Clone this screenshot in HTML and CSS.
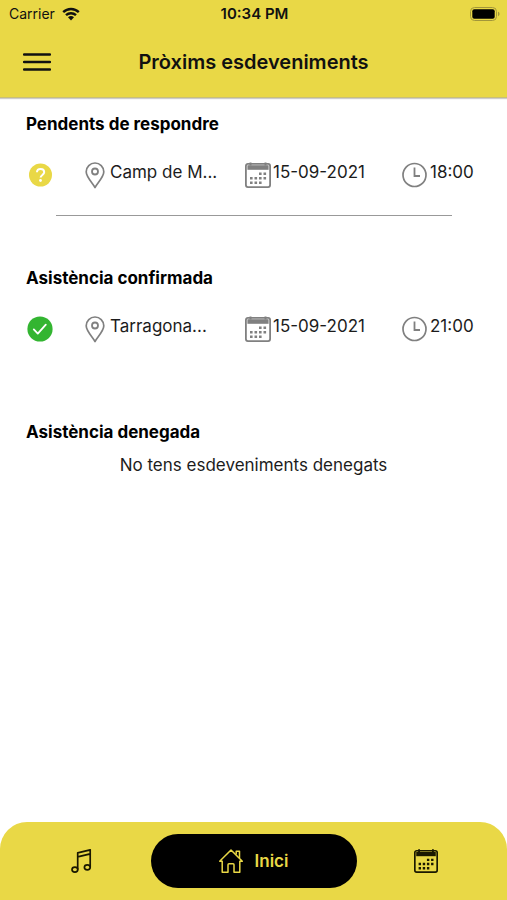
FILE: index.html
```
<!DOCTYPE html>
<html lang="ca">
<head>
    <meta charset="UTF-8">
    <meta name="viewport" content="width=device-width, initial-scale=1.0">
    <title>Pròxims esdeveniments</title>
    <link rel="stylesheet" href="styles.css">
</head>
<body>

    <!-- Shared icons -->
    <svg class="sprite" aria-hidden="true">
        <symbol id="icon-pin" viewBox="0 0 20 27">
            <path d="M10 25.5C7.5 21 1.2 15 1.2 9.8a8.8 8.8 0 0 1 17.6 0C18.8 15 12.5 21 10 25.5z" fill="none" stroke="currentColor" stroke-width="1.7" stroke-linejoin="round"/>
            <circle cx="10" cy="9.5" r="3" fill="none" stroke="currentColor" stroke-width="1.8"/>
        </symbol>
        <symbol id="icon-calendar" viewBox="0 0 26 26">
            <rect x="0.9" y="1.9" width="24.2" height="23.2" rx="2" fill="none" stroke="currentColor" stroke-width="1.8"/>
            <path d="M2.4 3.2h21.2v4.6H2.4z" fill="currentColor"/>
            <path d="M5.5 .4v3M20.5 .4v3" stroke="currentColor" stroke-width="2"/>
            <path d="M14 10.5h2.6v2.6H14zM18.5 10.5h2.6v2.6h-2.6zM5 15h2.6v2.6H5zM9.5 15h2.6v2.6H9.5zM14 15h2.6v2.6H14zM18.5 15h2.6v2.6h-2.6zM5 19.5h2.6v2.6H5zM9.5 19.5h2.6v2.6H9.5zM14 19.5h2.6v2.6H14z" fill="currentColor"/>
        </symbol>
        <symbol id="icon-clock" viewBox="0 0 26 26">
            <circle cx="12.5" cy="13" r="11.5" fill="none" stroke="currentColor" stroke-width="1.7"/>
            <path d="M12.5 5.5v8.5h5.5" fill="none" stroke="currentColor" stroke-width="1.8"/>
        </symbol>
    </svg>

    <header class="header">
        <div class="status-bar">
            <div class="carrier">
                <span>Carrier</span>
                <svg class="wifi" viewBox="0 0 18 14" aria-hidden="true">
                    <path d="M1.2 5.2a11.2 11.2 0 0 1 15.6 0M4 8.2a7.2 7.2 0 0 1 10 0" fill="none" stroke="currentColor" stroke-width="2.4"/>
                    <path d="M6 10.3a4.4 4.4 0 0 1 6 0L9 13.5z" fill="currentColor"/>
                </svg>
            </div>
            <span class="clock">10:34 PM</span>
            <svg class="battery" viewBox="0 0 30 14" aria-hidden="true">
                <rect x="0.5" y="0.5" width="26" height="13" rx="4" fill="none" stroke="#a2963a"/>
                <rect x="2.3" y="2.3" width="22.4" height="9.4" rx="2" fill="#000"/>
                <path d="M28 4.8c2 .6 2 3.8 0 4.4z" fill="#a2963a"/>
            </svg>
        </div>
        <div class="title-bar">
            <button class="menu-btn" type="button" aria-label="Menú">
                <svg viewBox="0 0 28 18" aria-hidden="true">
                    <path d="M1 1.5h26M1 9h26M1 16.5h26" stroke="currentColor" stroke-width="2.4" stroke-linecap="round"/>
                </svg>
            </button>
            <h1>Pròxims esdeveniments</h1>
        </div>
    </header>

    <main>
        <section>
            <h2>Pendents de respondre</h2>
            <div class="event pending">
                <svg class="status" viewBox="0 0 26 26" role="img" aria-label="Pendent">
                    <circle cx="13.5" cy="13" r="11.5" fill="#e9d846"/>
                    <path d="M10 10.3c0-4.4 7.2-4.4 7.2 0 0 2.6-3.6 2.7-3.6 5.2" fill="none" stroke="#fff" stroke-width="2"/>
                    <circle cx="13.5" cy="18.5" r="1.4" fill="#fff"/>
                </svg>
                <span class="place"><svg class="pin" aria-hidden="true"><use href="#icon-pin"/></svg>Camp de M...</span>
                <span class="date"><svg class="icon" aria-hidden="true"><use href="#icon-calendar"/></svg>15-09-2021</span>
                <span class="time"><svg class="icon" aria-hidden="true"><use href="#icon-clock"/></svg>18:00</span>
            </div>
        </section>

        <section>
            <h2>Asistència confirmada</h2>
            <div class="event">
                <svg class="status" viewBox="0 0 26 26" role="img" aria-label="Confirmada">
                    <circle cx="13" cy="13" r="12.6" fill="#33b531"/>
                    <path d="M6.8 13.4l4 4.2 8-9" fill="none" stroke="#fff" stroke-width="1.8" stroke-linecap="round" stroke-linejoin="round"/>
                </svg>
                <span class="place"><svg class="pin" aria-hidden="true"><use href="#icon-pin"/></svg>Tarragona...</span>
                <span class="date"><svg class="icon" aria-hidden="true"><use href="#icon-calendar"/></svg>15-09-2021</span>
                <span class="time"><svg class="icon" aria-hidden="true"><use href="#icon-clock"/></svg>21:00</span>
            </div>
        </section>

        <section>
            <h2>Asistència denegada</h2>
            <p class="empty">No tens esdeveniments denegats</p>
        </section>
    </main>

    <nav class="tabs">
        <a href="#musica" aria-label="Música">
            <svg class="tab-icon" viewBox="0 0 24 24" fill="none" stroke="currentColor" stroke-width="1.7" stroke-linejoin="round" aria-hidden="true">
                <path d="M8.7 20.5V3.8l12.5-3v17.5M8.7 7.8l12.5-3"/>
                <ellipse cx="5.9" cy="20.6" rx="2.9" ry="2.5"/>
                <ellipse cx="18.3" cy="18.3" rx="2.9" ry="2.5"/>
            </svg>
        </a>
        <a class="active" href="#inici">
            <svg class="tab-icon" viewBox="0 0 24 24" fill="none" stroke="currentColor" stroke-width="1.5" stroke-linejoin="round" aria-hidden="true">
                <path d="M.7 12.2L12 1l11.3 11.2h-2.5v11H15v-7.4q0-1-1-1h-4q-1 0-1 1v7.4H3.2v-11z"/>
                <path d="M17.2 5.6V2.2h3.3V9"/>
            </svg>
            Inici
        </a>
        <a href="#calendari" aria-label="Calendari">
            <svg class="tab-icon" aria-hidden="true"><use href="#icon-calendar"/></svg>
        </a>
    </nav>

</body>
</html>
```
FILE: styles.css
```
* {
    box-sizing: border-box;
}
body {
    margin: 0;
    min-height: 100vh;
    display: flex;
    flex-direction: column;
    font-family: Inter, "Liberation Sans", sans-serif;
    font-size: 17px;
    line-height: 24px;
    color: #1c1c1c;
    background: #fff;
}
h1, h2, p {
    margin: 0;
}
.sprite {
    position: absolute;
    width: 0;
    height: 0;
}

/* Header */
.header {
    color: #111;
    background: #e9d846;
    border-bottom: 1px solid #c9bf78;
    box-shadow: 0 1px 1px #ccc;
}
.status-bar {
    display: grid;
    grid-template-columns: 1fr auto 1fr;
    align-items: center;
    height: 27px;
    padding: 0 7px 0 9px;
    font-size: 14px;
}
.carrier {
    display: flex;
    align-items: center;
    gap: 7px;
}
.wifi {
    width: 18px;
    height: 14px;
}
.clock {
    font-size: 15px;
    font-weight: 600;
}
.battery {
    width: 30px;
    height: 14px;
    justify-self: end;
}
.title-bar {
    display: grid;
    grid-template-columns: 28px 1fr 28px;
    align-items: center;
    height: 70px;
    padding: 0 23px;
}
.menu-btn {
    display: flex;
    padding: 0;
    border: 0;
    color: inherit;
    background: none;
    cursor: pointer;
}
.menu-btn svg {
    width: 28px;
    height: 18px;
}
h1 {
    font-size: 20px;
    font-weight: 600;
    text-align: center;
}

/* Event lists */
main {
    flex: 1;
    padding: 14px 26px;
}
section {
    min-height: 154px;
}
h2 {
    font-size: 17px;
    font-weight: 700;
    color: #000;
}
.event {
    display: grid;
    grid-template-columns: 59px 160px 157px 1fr;
    align-items: center;
    padding-top: 24px;
    white-space: nowrap;
}
.pending::after {
    content: "";
    grid-column: 1 / -1;
    height: 1px;
    margin: 25px 29px 0 30px;
    background: #999;
}
.status {
    width: 26px;
    height: 26px;
    margin-left: 1px;
}
.place, .date, .time {
    display: flex;
    align-items: flex-start;
    height: 30px;
}
.place {
    gap: 5px;
}
.date, .time {
    gap: 2px;
}
.pin, .icon {
    flex: none;
    margin-top: 2px;
    color: #808080;
}
.pin {
    width: 20px;
    height: 27px;
}
.icon {
    width: 26px;
    height: 26px;
}
.empty {
    margin-top: 9px;
    text-align: center;
}

/* Bottom tabs */
.tabs {
    display: grid;
    grid-template-columns: 1fr 206px 1fr;
    padding: 12px;
    border-radius: 27px 27px 0 0;
    background: #e9d846;
}
.tabs a {
    display: flex;
    align-items: center;
    justify-content: center;
    gap: 12px;
    height: 54px;
    color: #1a1800;
    font-weight: 600;
    text-decoration: none;
}
.tabs .active {
    border-radius: 27px;
    color: #e9d846;
    background: #000;
}
.tab-icon {
    width: 24px;
    height: 24px;
}
```
